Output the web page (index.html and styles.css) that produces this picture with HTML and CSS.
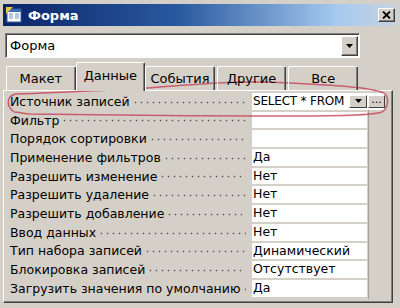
FILE: index.html
```html
<!DOCTYPE html>
<html lang="ru">

<head>
    <meta charset="UTF-8">
    <title>Форма</title>
    <link rel="stylesheet" href="styles.css">
</head>

<body>
    <div class="window">
        <div class="titlebar">
            <svg class="app-icon" viewBox="0 0 16 16">
                <rect x="1" y="2" width="14" height="13" fill="#fff" stroke="#3a5a9a"/>
                <rect x="1" y="2" width="14" height="3" fill="#3a6ab0"/>
                <path d="M3 7h4M3 9h4M3 11h4M9 7h4M9 9h4M9 11h4" stroke="#6a8ac8"/>
                <path d="M0 0h7l-7 7z" fill="#e8c840"/>
            </svg>
            <span class="title">Форма</span>
            <div class="close">
                <svg width="9" height="8" viewBox="0 0 9 8"><path d="M1 0.5l7 7M8 0.5l-7 7" stroke="#000" stroke-width="1.8"/></svg>
            </div>
        </div>

        <div class="dialog">
            <div class="combo">
                <span class="combo-text">Форма</span>
                <span class="combo-btn"><svg width="7" height="4" viewBox="0 0 7 4"><path d="M0 0h7L3.5 4z"/></svg></span>
            </div>

            <div class="tabs">
                <div class="tab">Макет</div>
                <div class="tab active">Данные</div>
                <div class="tab">События</div>
                <div class="tab">Другие</div>
                <div class="tab">Все</div>
            </div>

            <div class="page">
                <div class="grid">
                    <div class="row">
                        <div class="label"><span>Источник записей</span><span class="dots"></span></div>
                        <div class="value editing">
                            <span class="value-text">SELECT * FROM</span>
                            <span class="small-btn drop"><svg width="7" height="4" viewBox="0 0 7 4"><path d="M0 0h7L3.5 4z"/></svg></span>
                            <span class="small-btn more">...</span>
                        </div>
                    </div>
                    <div class="row">
                        <div class="label"><span>Фильтр</span><span class="dots"></span></div>
                        <div class="value"></div>
                    </div>
                    <div class="row">
                        <div class="label"><span>Порядок сортировки</span><span class="dots"></span></div>
                        <div class="value"></div>
                    </div>
                    <div class="row">
                        <div class="label"><span>Применение фильтров</span><span class="dots"></span></div>
                        <div class="value">Да</div>
                    </div>
                    <div class="row">
                        <div class="label"><span>Разрешить изменение</span><span class="dots"></span></div>
                        <div class="value">Нет</div>
                    </div>
                    <div class="row">
                        <div class="label"><span>Разрешить удаление</span><span class="dots"></span></div>
                        <div class="value">Нет</div>
                    </div>
                    <div class="row">
                        <div class="label"><span>Разрешить добавление</span><span class="dots"></span></div>
                        <div class="value">Нет</div>
                    </div>
                    <div class="row">
                        <div class="label"><span>Ввод данных</span><span class="dots"></span></div>
                        <div class="value">Нет</div>
                    </div>
                    <div class="row">
                        <div class="label"><span>Тип набора записей</span><span class="dots"></span></div>
                        <div class="value">Динамический</div>
                    </div>
                    <div class="row">
                        <div class="label"><span>Блокировка записей</span><span class="dots"></span></div>
                        <div class="value">Отсутствует</div>
                    </div>
                    <div class="row">
                        <div class="label"><span>Загрузить значения по умолчанию</span><span class="dots"></span></div>
                        <div class="value">Да</div>
                    </div>
                </div>
            </div>
        </div>

        <!-- hand-drawn highlight around the record source row -->
        <svg class="mark" viewBox="0 0 400 308">
            <path d="M14 112 C6 106, 6 96, 16 94 C60 92, 110 91, 160 87 C200 84, 240 80, 290 83 C330 85, 370 87, 384 93 C390 98, 388 108, 382 112 C370 116, 330 116, 260 116 C180 116, 80 115, 30 114 C22 113, 17 112, 14 112"
                fill="none" stroke="#c8485a" stroke-width="1.5" opacity="0.85"/>
        </svg>
    </div>
</body>

</html>
```

FILE: styles.css
```css
body {
    margin: 0;
    background: #d4d0c8;
    font-family: "DejaVu Sans", Tahoma, sans-serif;
    font-size: 12.5px;
    color: #000;
}

.window {
    position: relative;
    width: 400px;
    height: 308px;
    padding-top: 4px;
    box-sizing: border-box;
    overflow: hidden;
}

.titlebar {
    display: flex;
    align-items: center;
    height: 22px;
    margin: 0 3px;
    padding: 0 2px 0 3px;
    background: linear-gradient(to right, #0a246a 0%, #2a5aa0 45%, #a6caf0 85%, #c9d2de 100%);
}

.app-icon {
    width: 16px;
    height: 16px;
}

.title {
    flex: 1;
    margin-left: 6px;
    color: #fff;
    font-weight: bold;
    font-size: 13px;
}

.close {
    display: flex;
    align-items: center;
    justify-content: center;
    width: 15px;
    height: 12px;
    background: #d4d0c8;
    border: 1px solid;
    border-color: #fff #404040 #404040 #fff;
    box-shadow: inset -1px -1px #808080;
}

.dialog {
    padding: 7px 7px 0 3px;
}

.combo {
    display: flex;
    width: 355px;
    height: 25px;
    margin-left: 2px;
    box-sizing: border-box;
    border: 1px solid;
    border-color: #808080 #fff #fff #808080;
    box-shadow: inset 1px 1px #404040;
    background: #fff;
}

.combo-text {
    flex: 1;
    padding: 1px 0 0 4px;
    line-height: 22px;
    font-size: 13px;
}

.combo-btn {
    display: flex;
    align-items: center;
    justify-content: center;
    width: 15px;
    margin: 2px 1px 1px 0;
    background: #d4d0c8;
    border: 1px solid;
    border-color: #fff #404040 #404040 #fff;
    box-shadow: inset -1px -1px #808080;
}

.tabs {
    display: flex;
    align-items: flex-end;
    gap: 2px;
    width: 352px;
    height: 28px;
    margin-top: 4px;
    padding-left: 3px;
    position: relative;
    z-index: 1;
}

.tab {
    flex: 1;
    height: 24px;
    box-sizing: border-box;
    border: 1px solid;
    border-color: #fff #404040 transparent #fff;
    border-bottom: none;
    border-radius: 2px 2px 0 0;
    box-shadow: inset -1px 0 #808080;
    text-align: center;
    line-height: 24px;
    font-size: 13px;
}

.tab.active {
    height: 29px;
    margin: 0 -2px -1px;
    background: #d4d0c8;
    line-height: 26px;
}

.page {
    width: 390px;
    height: 213px;
    box-sizing: border-box;
    border: 1px solid;
    border-color: #fff #404040 #404040 #fff;
    box-shadow: inset -1px -1px #808080;
    padding: 2px 0 0 2px;
}

.grid {
    width: 362px;
    border-right: 1px solid #a0a0a0;
}

.row {
    display: flex;
    height: 18.7px;
}

.label {
    display: flex;
    align-items: center;
    flex-shrink: 0;
    width: 246px;
    padding: 0 6px 2px 4px;
    box-sizing: border-box;
    white-space: nowrap;
}

.dots {
    flex: 1;
    align-self: flex-end;
    height: 3px;
    margin: 0 0 6px 4px;
    background: radial-gradient(circle at 1.5px 1.5px, #555 0.7px, transparent 1.1px) 0 0 / 6px 3px repeat-x;
}

.value {
    flex-shrink: 0;
    width: 115px;
    height: 16.7px;
    padding-left: 1px;
    box-sizing: border-box;
    background: #fff;
    line-height: 16px;
    white-space: nowrap;
    overflow: hidden;
}

.value.editing {
    display: flex;
    align-items: center;
    width: 133px;
    overflow: visible;
}

.value-text {
    flex: 1;
    min-width: 0;
    overflow: hidden;
    font-size: 12px;
    letter-spacing: -0.2px;
}

.small-btn {
    display: flex;
    flex-shrink: 0;
    align-items: center;
    justify-content: center;
    height: 13px;
    box-sizing: border-box;
    background: #d4d0c8;
    border: 1px solid;
    border-color: #fff #404040 #404040 #fff;
    font-size: 11px;
    line-height: 8px;
}

.small-btn.drop {
    width: 18px;
}

.small-btn.more {
    width: 17px;
    margin-left: 1px;
    align-items: flex-end;
    padding-bottom: 3px;
}

.mark {
    position: absolute;
    left: 0;
    top: 0;
    width: 400px;
    height: 308px;
    pointer-events: none;
}
```
